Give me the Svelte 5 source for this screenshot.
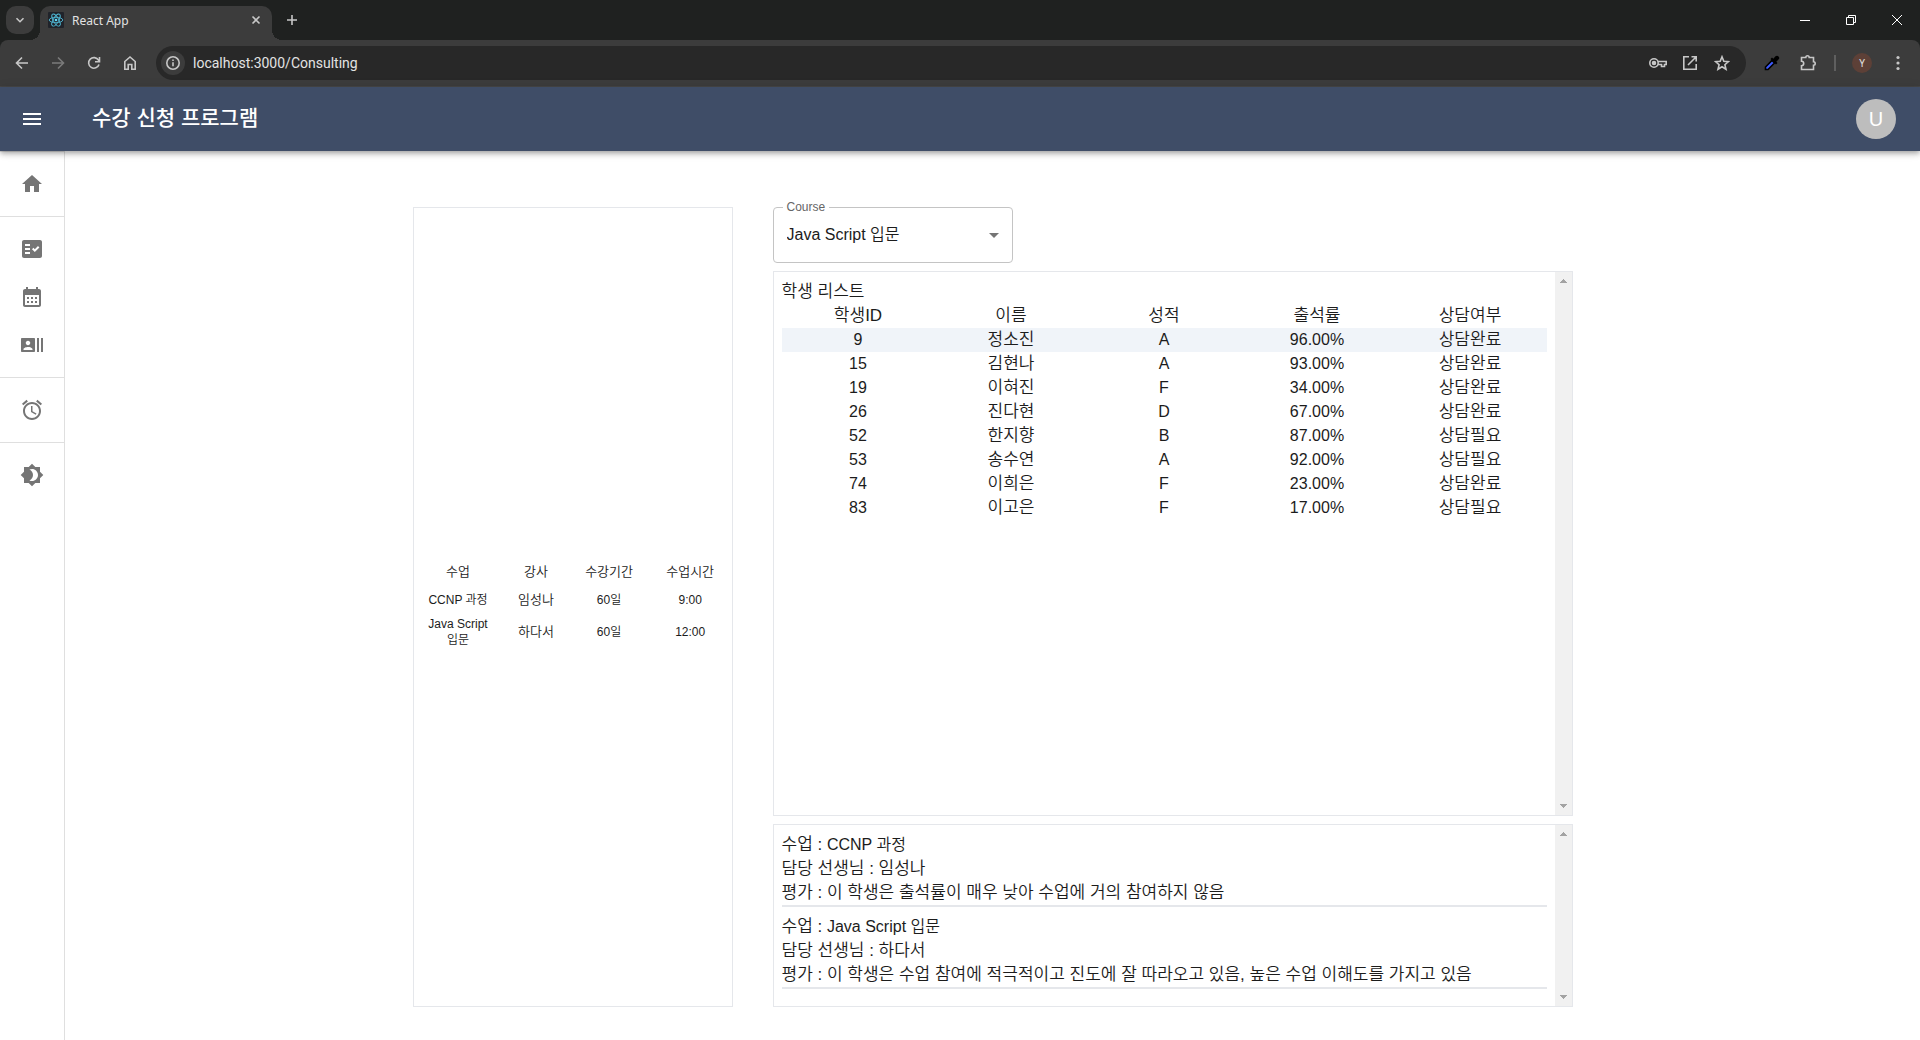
<script>
  const icons = {
    home: 'M10 20v-6h4v6h5v-8h3L12 3 2 12h3v8z',
    factCheck:
      'M20 3H4c-1.1 0-2 .9-2 2v14c0 1.1.9 2 2 2h16c1.1 0 2-.9 2-2V5c0-1.1-.9-2-2-2zM10 17H5v-2h5zm0-4H5v-2h5zm0-4H5V7h5zm4.82 6L12 12.16l1.41-1.41 1.41 1.42L17.99 9l1.42 1.42z',
    calendar:
      'M19 4h-1V2h-2v2H8V2H6v2H5c-1.11 0-1.99.9-1.99 2L3 20c0 1.1.89 2 2 2h14c1.1 0 2-.9 2-2V6c0-1.1-.9-2-2-2zm0 16H5V10h14zM9 14H7v-2h2zm4 0h-2v-2h2zm4 0h-2v-2h2zm-8 4H7v-2h2zm4 0h-2v-2h2zm4 0h-2v-2h2z',
    actors:
      'M21 5v14h2V5h-2zm-4 14h2V5h-2v14zM14 5H2c-.55 0-1 .45-1 1v12c0 .55.45 1 1 1h12c.55 0 1-.45 1-1V6c0-.55-.45-1-1-1zM8 7.75c1.24 0 2.25 1.01 2.25 2.25S9.24 12.25 8 12.25 5.75 11.24 5.75 10 6.76 7.75 8 7.75zM12.5 17h-9v-.75c0-1.5 3-2.25 4.5-2.25s4.5.75 4.5 2.25V17z',
    alarm:
      'M22 5.72l-4.6-3.86-1.29 1.53 4.6 3.86L22 5.72zM7.88 3.39L6.6 1.86 2 5.71l1.29 1.53 4.59-3.85zM12.5 8H11v6l4.75 2.85.75-1.23-4-2.37V8zM12 4c-4.97 0-9 4.03-9 9s4.02 9 9 9c4.97 0 9-4.03 9-9s-4.03-9-9-9zm0 16c-3.87 0-7-3.13-7-7s3.13-7 7-7 7 3.13 7 7-3.13 7-7 7z',
    brightness:
      'M20 8.69V4h-4.69L12 .69 8.69 4H4v4.69L.69 12 4 15.31V20h4.69L12 23.31 15.31 20H20v-4.69L23.31 12 20 8.69zM12 18c-.89 0-1.74-.2-2.5-.55C11.56 16.5 13 14.42 13 12s-1.44-4.5-3.5-5.45C10.26 6.2 11.11 6 12 6c3.31 0 6 2.69 6 6s-2.69 6-6 6z',
  };

  const navGroups = [
    [{ label: 'Home', icon: icons.home }],
    [
      { label: 'Attendance', icon: icons.factCheck },
      { label: 'Schedule', icon: icons.calendar },
      { label: 'Students', icon: icons.actors },
    ],
    [{ label: 'Alarm', icon: icons.alarm }],
    [{ label: 'Theme', icon: icons.brightness }],
  ];

  const classes = [
    ['CCNP 과정', '임성나', '60일', '9:00'],
    ['Java Script 입문', '하다서', '60일', '12:00'],
  ];

  const students = [
    [9, '정소진', 'A', '96.00%', '상담완료'],
    [15, '김현나', 'A', '93.00%', '상담완료'],
    [19, '이혀진', 'F', '34.00%', '상담완료'],
    [26, '진다현', 'D', '67.00%', '상담완료'],
    [52, '한지향', 'B', '87.00%', '상담필요'],
    [53, '송수연', 'A', '92.00%', '상담필요'],
    [74, '이희은', 'F', '23.00%', '상담완료'],
    [83, '이고은', 'F', '17.00%', '상담필요'],
  ];

  const reviews = [
    {
      course: 'CCNP 과정',
      teacher: '임성나',
      comment: '이 학생은 출석률이 매우 낮아 수업에 거의 참여하지 않음',
    },
    {
      course: 'Java Script 입문',
      teacher: '하다서',
      comment: '이 학생은 수업 참여에 적극적이고 진도에 잘 따라오고 있음, 높은 수업 이해도를 가지고 있음',
    },
  ];

  let course = $state('Java Script 입문');
  let selectedId = $state(9);
</script>

{#snippet scrollTrack()}
  <div class="track">
    <button aria-label="Scroll up"><svg viewBox="0 0 17 17" width="17" height="17"><path d="M5 11h7v-1h-1v-1h-1v-1h-1v-1h-1v1h-1v1h-1v1h-1z" /></svg></button>
    <button aria-label="Scroll down"><svg viewBox="0 0 17 17" width="17" height="17"><path d="M5 6h7v1h-1v1h-1v1h-1v1h-1v-1h-1v-1h-1v-1h-1z" /></svg></button>
  </div>
{/snippet}

<div class="window">
  <header class="browser">
    <div class="tabstrip">
      <button class="tab-search" aria-label="Search tabs">
        <svg viewBox="0 0 10 10" width="10" height="10"><path d="M1.5 3.2L5 6.7l3.5-3.5" /></svg>
      </button>
      <div class="tab">
        <svg class="favicon" viewBox="0 0 16 16" width="16" height="16">
          <rect width="16" height="16" rx="1" fill="#20232a" />
          <g fill="none" stroke="#4fb8d4" stroke-width="0.9">
            <ellipse cx="8" cy="8" rx="6.8" ry="2.7" />
            <ellipse cx="8" cy="8" rx="6.8" ry="2.7" transform="rotate(60 8 8)" />
            <ellipse cx="8" cy="8" rx="6.8" ry="2.7" transform="rotate(120 8 8)" />
          </g>
          <circle cx="8" cy="8" r="1.3" fill="#61dafb" />
        </svg>
        <span>React App</span>
        <button class="tab-close" aria-label="Close tab">
          <svg viewBox="0 0 10 10" width="10" height="10"><path d="M1.5 1.5l7 7m0-7l-7 7" /></svg>
        </button>
      </div>
      <button class="new-tab" aria-label="New tab">
        <svg viewBox="0 0 12 12" width="12" height="12"><path d="M6 1v10M1 6h10" /></svg>
      </button>
      <div class="window-controls">
        <button aria-label="Minimize"><svg viewBox="0 0 10 10" width="10" height="10"><path d="M0 5.5h10" /></svg></button>
        <button aria-label="Restore"><svg viewBox="0 0 10 10" width="10" height="10"><path d="M.5 2.5h7v7h-7zM2.5 2.5v-2h7v7h-2" /></svg></button>
        <button aria-label="Close"><svg viewBox="0 0 10 10" width="10" height="10"><path d="M0 0l10 10M10 0L0 10" /></svg></button>
      </div>
    </div>
    <div class="toolbar">
      <button aria-label="Back"><svg viewBox="0 0 16 16" width="16" height="16"><path d="M14 8H3M8 2.5L2.5 8 8 13.5" /></svg></button>
      <button class="dim" aria-label="Forward"><svg viewBox="0 0 16 16" width="16" height="16"><path d="M2 8h11M8 2.5L13.5 8 8 13.5" /></svg></button>
      <button aria-label="Reload"><svg viewBox="0 0 16 16" width="16" height="16"><path d="M13 9.5A5.3 5.3 0 1 1 12.5 5.2L13.5 6.5M13.5 2v4.7H9" /></svg></button>
      <button aria-label="Home page"><svg viewBox="0 0 16 16" width="16" height="16"><path d="M2.8 14.2V6.5L8 2l5.2 4.500v7.700H9.800V9.500H6.200v4.700z" /></svg></button>
      <div class="omnibox">
        <button class="site-info" aria-label="Site information">
          <svg viewBox="0 0 16 16" width="16" height="16"><circle cx="8" cy="8" r="6.2" /><path d="M8 7.2v4M8 4.6v1.5" /></svg>
        </button>
        <input aria-label="Address" value="localhost:3000/Consulting" />
        <button aria-label="Passwords"><svg viewBox="0 0 20 16" width="20" height="16"><circle cx="6" cy="8" r="4.2" /><circle cx="6" cy="8" r="1.5" fill="#c7c7c7" /><path d="M10 6.5h8.2v3h-1.7v2h-3v-2H10" /></svg></button>
        <button aria-label="Open in app"><svg viewBox="0 0 16 16" width="16" height="16"><path d="M7 1.8H1.8v12.4h12.4V9M9.5 1.8h4.7v4.7M14 2L6 10" /></svg></button>
        <button aria-label="Bookmark"><svg viewBox="0 0 16 16" width="16" height="16"><path d="M8 1.8l1.8 4.4 4.7.4-3.6 3.1 1.1 4.6L8 11.8l-4 2.5 1.1-4.6-3.600-3.100 4.700-.4z" /></svg></button>
      </div>
      <button aria-label="Color picker">
        <svg viewBox="0 0 16 16" width="16" height="16"><path d="M1.5 14.5V12L8 5.5 10.5 8 4 14.5z" fill="#3d5afe" stroke="#000" stroke-width="1.6" /><path d="M6.5 4l1.5-1.5 1.3 1.2L11.5 1.3c2-2 5 1 3.2 3L12.3 6.7l1.2 1.3L12 9.5z" fill="#000" stroke="none" /></svg>
      </button>
      <button aria-label="Extensions"><svg viewBox="0 0 18 18" width="18" height="18"><path d="M2.5 3.5h4.3a1.7 1.7 0 0 1 3.4 0h4.3v4.3a1.7 1.7 0 0 1 0 3.4v4.3h-12v-3.8a2.2 2.2 0 0 0 0-4.4z" /></svg></button>
      <span class="divider"></span>
      <button class="profile" aria-label="Profile">Y</button>
      <button aria-label="Menu"><svg viewBox="0 0 16 16" width="16" height="16"><g fill="#c7c7c7" stroke="none"><circle cx="8" cy="2.5" r="1.6" /><circle cx="8" cy="8" r="1.6" /><circle cx="8" cy="13.5" r="1.6" /></g></svg></button>
    </div>
  </header>

  <header class="appbar">
    <button class="menu" aria-label="Open menu"><svg viewBox="0 0 24 24" width="24" height="24"><path d="M3 18h18v-2H3zm0-5h18v-2H3zm0-7v2h18V6z" /></svg></button>
    <h1>수강 신청 프로그램</h1>
    <button class="avatar" aria-label="Account">U</button>
  </header>

  <div class="body">
    <nav>
      {#each navGroups as group}
        <ul>
          {#each group as item}
            <li><a href="#top" aria-label={item.label}><svg viewBox="0 0 24 24" width="24" height="24"><path d={item.icon} fill-rule="evenodd" /></svg></a></li>
          {/each}
        </ul>
      {/each}
    </nav>

    <main>
      <section class="card classes">
        <table>
          <colgroup><col class="c1" /><col class="c2" /><col class="c3" /><col class="c4" /></colgroup>
          <thead><tr><th>수업</th><th>강사</th><th>수강기간</th><th>수업시간</th></tr></thead>
          <tbody>
            {#each classes as row}
              <tr>{#each row as cell, i}<td class:teacher={i === 1}>{cell}</td>{/each}</tr>
            {/each}
          </tbody>
        </table>
      </section>

      <div class="detail">
        <div class="field">
          <label for="course">Course</label>
          <select id="course" bind:value={course}>
            <option>Java Script 입문</option>
            <option>CCNP 과정</option>
          </select>
          <svg viewBox="0 0 24 24" width="24" height="24"><path d="M7 10l5 5 5-5z" /></svg>
        </div>

        <section class="card">
          <div class="content">
            <h2>학생 리스트</h2>
            <table class="students">
              <thead><tr><th>학생ID</th><th>이름</th><th>성적</th><th>출석률</th><th>상담여부</th></tr></thead>
              <tbody>
                {#each students as row}
                  <tr class:selected={row[0] === selectedId} onclick={() => (selectedId = row[0])}>
                    {#each row as cell, i}<td class:hangul={i === 1 || i === 4}>{cell}</td>{/each}
                  </tr>
                {/each}
              </tbody>
            </table>
          </div>
          {@render scrollTrack()}
        </section>

        <section class="card">
          <div class="content">
            {#each reviews as r}
              <article>
                <p>수업 : <span>{r.course}</span></p>
                <p>담당 선생님 : {r.teacher}</p>
                <p>평가 : {r.comment}</p>
              </article>
            {/each}
          </div>
          {@render scrollTrack()}
        </section>
      </div>
    </main>
  </div>
</div>

<style>
  :global(body) {
    background: #fff;
  }

  .window,
  .window :global(*) {
    box-sizing: border-box;
  }

  .window {
    display: flex;
    flex-direction: column;
    min-height: 100vh;
    color: #1c1c1c;
    font: 350 16px/24px 'Liberation Sans', 'Noto Sans CJK KR', sans-serif;
  }

  button,
  input,
  select {
    margin: 0;
    padding: 0;
    border: 0;
    background: none;
    color: inherit;
    font: inherit;
  }

  button {
    display: flex;
    align-items: center;
    justify-content: center;
    flex: none;
  }

  h1,
  h2,
  p,
  ul {
    margin: 0;
    padding: 0;
    font-weight: inherit;
    list-style: none;
  }

  svg {
    display: block;
    flex: none;
  }

  /* Browser frame */
  .browser {
    background: #1f2120;
    color: #e3e3e3;
    font-family: 'Noto Sans', sans-serif;
    font-weight: 400;
  }

  .browser svg {
    fill: none;
    stroke: #c7c7c7;
    stroke-width: 1.6;
  }

  .tabstrip {
    display: flex;
    height: 40px;
    padding-left: 6px;
  }

  .tab-search {
    width: 28px;
    height: 28px;
    margin: 6px 6px 0 0;
    border-radius: 10px;
    background: #3c3c3c;
  }

  .tab {
    position: relative;
    display: flex;
    align-items: center;
    width: 232px;
    height: 34px;
    margin-top: 6px;
    padding: 0 8px 6px;
    border-radius: 10px 10px 0 0;
    background: #3c3c3c;
    font-size: 12px;
  }

  .tab span {
    padding-top: 2px;
  }

  .tab::before,
  .tab::after {
    content: '';
    position: absolute;
    bottom: 0;
    width: 10px;
    height: 10px;
  }

  .tab::before {
    right: 100%;
    background: radial-gradient(circle at 0 0, transparent 10px, #3c3c3c 10px);
  }

  .tab::after {
    left: 100%;
    background: radial-gradient(circle at 100% 0, transparent 10px, #3c3c3c 10px);
  }

  .tab .favicon {
    stroke: none;
    margin-right: 8px;
  }

  .tab-close {
    width: 16px;
    height: 16px;
    margin-left: auto;
  }

  .new-tab {
    width: 28px;
    height: 28px;
    margin: 6px 0 0 6px;
  }

  .window-controls {
    display: flex;
    margin-left: auto;
  }

  .window-controls button {
    width: 46px;
    height: 40px;
  }

  .window-controls svg {
    stroke: #fff;
    stroke-width: 1;
  }

  .toolbar {
    display: flex;
    align-items: center;
    height: 47px;
    padding: 0 4px 1px;
    border-bottom: 1px solid #474747;
    border-radius: 8px 8px 0 0;
    background: #3c3c3c;
  }

  .toolbar button {
    width: 36px;
    height: 32px;
  }

  .toolbar .dim {
    opacity: 0.45;
  }

  .omnibox {
    display: flex;
    align-items: center;
    flex: 1;
    height: 34px;
    margin: 0 8px;
    padding: 0 8px 0 5px;
    border-radius: 17px;
    background: #282828;
  }

  .omnibox button {
    width: 32px;
  }

  .omnibox .site-info {
    width: 24px;
    height: 24px;
    border-radius: 12px;
    background: #3c3c3c;
  }

  .omnibox input {
    flex: 1;
    min-width: 0;
    padding-left: 8px;
    font-family: Roboto, sans-serif;
    font-size: 14px;
  }

  .divider {
    width: 2px;
    height: 16px;
    margin: 0 8px;
    background: #5f5f5f;
  }

  .toolbar .profile {
    width: 20px;
    height: 20px;
    margin: 0 8px;
    border-radius: 10px;
    background: #5d4037;
    font-size: 10px;
  }

  /* Application */
  .appbar {
    position: relative;
    z-index: 1;
    display: flex;
    align-items: center;
    height: 64px;
    padding: 0 24px 0 12px;
    background: #3f4d67;
    color: #fff;
    box-shadow:
      0 2px 4px -1px rgba(0, 0, 0, 0.2),
      0 4px 5px rgba(0, 0, 0, 0.14),
      0 1px 10px rgba(0, 0, 0, 0.12);
  }

  .appbar svg {
    fill: #fff;
  }

  .menu {
    width: 40px;
    height: 40px;
    margin-right: 40px;
  }

  .appbar h1 {
    flex: 1;
    padding-bottom: 2px;
    font-size: 21px;
    font-weight: 500;
    line-height: 32px;
  }

  .avatar {
    width: 40px;
    height: 40px;
    border-radius: 20px;
    background: #bdbdbd;
    font-size: 20px;
    font-weight: 400;
  }

  .body {
    display: flex;
    flex: 1;
  }

  nav {
    flex: none;
    width: 65px;
    border-right: 1px solid #dfdfdf;
  }

  ul {
    padding: 8px 0;
    border-top: 1px solid #dfdfdf;
  }

  nav a {
    display: flex;
    align-items: center;
    justify-content: center;
    height: 48px;
  }

  nav svg {
    fill: #757575;
  }

  main {
    display: flex;
    flex: 1;
    justify-content: center;
    gap: 40px;
    min-width: 0;
    padding: 56px 24px 33px;
  }

  .card {
    display: flex;
    border: 1px solid #e5e7eb;
  }

  .classes {
    align-items: center;
    flex: 0 1 320px;
    font-size: 12px;
    line-height: 16px;
  }

  table {
    width: 100%;
    border-collapse: collapse;
    table-layout: fixed;
    text-align: center;
  }

  th,
  td {
    padding: 0;
    font-weight: inherit;
  }

  .classes table {
    margin-bottom: 6px;
  }

  .classes th {
    padding: 8px 0;
    font-size: 13px;
  }

  .classes td {
    padding: 4px 12px;
  }

  .classes .teacher {
    font-size: 13px;
  }

  .c1 {
    width: 28%;
  }

  .c2 {
    width: 21%;
  }

  .c3 {
    width: 25%;
  }

  .c4 {
    width: 26%;
  }

  .detail {
    display: grid;
    grid-template-rows: auto 1fr minmax(183px, auto);
    gap: 8px;
    flex: 0 1 800px;
    min-width: 0;
  }

  .field {
    position: relative;
    width: 240px;
  }

  .field label {
    position: absolute;
    top: -8px;
    left: 10px;
    padding: 0 4px;
    background: #fff;
    color: #666;
    font-size: 12px;
    line-height: 16px;
  }

  .field select {
    display: block;
    width: 100%;
    height: 56px;
    padding: 0 32px 0 13px;
    border: 1px solid #c4c4c4;
    border-radius: 4px;
    appearance: none;
  }

  .field svg {
    position: absolute;
    top: 16px;
    right: 7px;
    fill: #757575;
    pointer-events: none;
  }

  .content {
    flex: 1;
    min-width: 0;
    padding: 8px;
  }

  h2,
  p,
  .students th,
  .hangul {
    font-size: 17px;
    line-height: 24px;
  }

  p span {
    font-size: 16px;
    line-height: 16px;
  }

  .students tr {
    height: 24px;
  }

  .selected {
    background: #f0f4f9;
  }

  article {
    margin-bottom: 8px;
    border-bottom: 2px solid #e5e7eb;
  }

  .track {
    display: flex;
    flex: none;
    flex-direction: column;
    justify-content: space-between;
    width: 17px;
    background: #f1f1f1;
  }

  .track svg {
    fill: #a3a3a3;
  }
</style>
